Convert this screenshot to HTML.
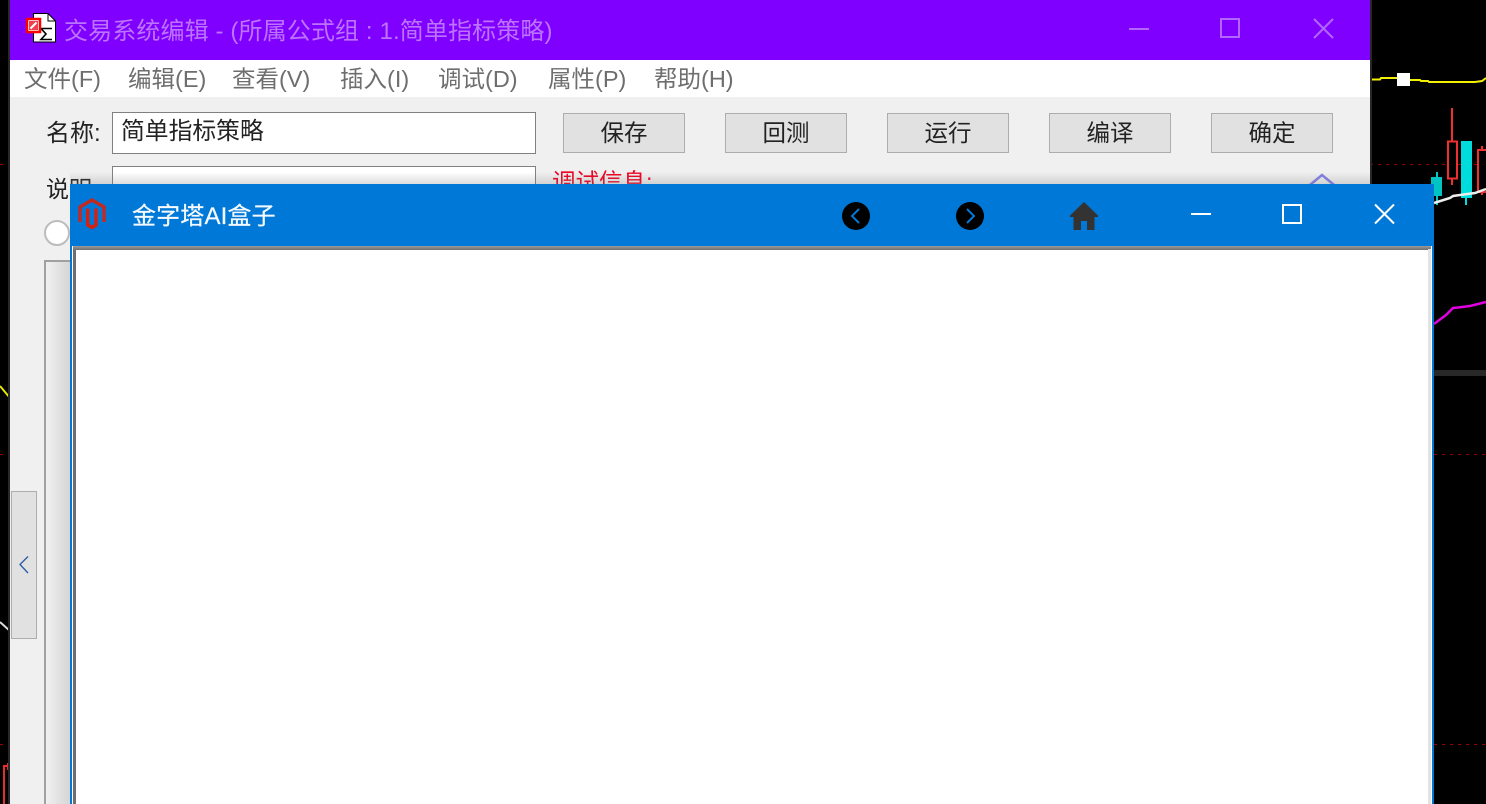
<!DOCTYPE html>
<html lang="zh"><head><meta charset="utf-8"><title>金字塔AI盒子</title>
<style>
html,body{margin:0;padding:0;width:1486px;height:804px;overflow:hidden;background:#000}
body{position:relative;font-family:"Liberation Sans","Noto Sans CJK SC",sans-serif;color:#111}
.a{position:absolute;box-sizing:border-box}
.t{position:absolute;white-space:nowrap;line-height:32px;height:32px}
.btn{position:absolute;top:113px;width:122px;height:40px;background:#e1e1e1;border:1px solid #adadad;box-sizing:border-box;text-align:center;font-size:23.500px;line-height:38px;color:#222}
.m{position:absolute;top:63px;font-size:23.500px;line-height:32px;color:#6e6e6e;white-space:nowrap}
svg{position:absolute;overflow:visible}
</style></head><body>
<svg style="left:0;top:0" width="1486" height="804" viewBox="0 0 1486 804" fill="none">
<path d="M1370 79.500H1380L1381 78H1400M1410 80H1420L1421 81H1428L1429 82H1475L1482 81L1486 78" stroke="#f3f000" stroke-width="2"/>
<path d="M0 386L10 398" stroke="#e8e800" stroke-width="2"/>
<path d="M0 622L10 631" stroke="#ddd" stroke-width="2"/>
<path d="M1370 164.500H1486M1434 454.500H1486M1434 744.500H1486M0 164.500H10M0 454.500H10M0 744.500H10" stroke="#a00000" stroke-dasharray="3 5"/>
<path d="M1437 172V205" stroke="#00c8c8" stroke-width="2"/>
<rect x="1431" y="177" width="11" height="19" fill="#00c4c4"/>
<path d="M1452 108V185" stroke="#ee3030" stroke-width="2"/>
<rect x="1448" y="141.500" width="9" height="37" fill="#000" stroke="#ee3030" stroke-width="2"/>
<path d="M1466 195V205" stroke="#00dcdc" stroke-width="2"/>
<rect x="1461" y="141" width="11" height="57" fill="#00dcdc"/>
<path d="M1482 146V195" stroke="#ee3030" stroke-width="2"/>
<rect x="1478" y="150" width="12" height="42" fill="#000" stroke="#ee3030" stroke-width="2"/>
<path d="M1434 203L1450 198L1453 196L1460 195L1475 193L1486 189" stroke="#eeeeee" stroke-width="2.500"/>
<path d="M1434 324L1446 315L1453 308L1458 307.500L1470 306L1486 302" stroke="#e000e0" stroke-width="2.500"/>
<rect x="1397" y="73" width="13" height="13" fill="#fff"/>
<rect x="1434" y="370" width="52" height="6" fill="#282828"/>
<path d="M4 804V766H10M8 763V770" stroke="#e03030" stroke-width="2"/>
</svg>
<div class="a" style="left:8px;top:0;width:2px;height:804px;background:#282828"></div>
<div class="a" style="left:1370px;top:0;width:2px;height:184px;background:#282828"></div>

<!-- back window -->
<div class="a" style="left:10px;top:0;width:1360px;height:804px;background:#f0f0f0"></div>
<div class="a" style="left:10px;top:0;width:1360px;height:60px;background:#8000ff"></div>
<div class="a" style="left:10px;top:60px;width:1360px;height:37px;background:#fff"></div>
<svg style="left:26px;top:14px" width="32" height="30" viewBox="0 0 32 30" fill="none">
<path d="M7.500 -.500H22L29.500 7V28H7.500Z" fill="#fff" stroke="#000"/><path d="M22 0V7H29" stroke="#000"/>
<path d="M26 14.500H15L20 20L15 25.500H26" stroke="#000" stroke-width="1.600"/>
<rect x="1" y="5" width="13" height="13" fill="#fff" stroke="#f00" stroke-width="2.500"/>
<rect x="3" y="7" width="9" height="9" fill="#f04050"/>
<path d="M4.500 14.500L10.500 8.500" stroke="#fff" stroke-width="2"/>
</svg>
<div class="t" style="left:64px;top:16px;font-size:24px;letter-spacing:.12px;color:#bc73ff">交易系统编辑 - (所属公式组 : 1.简单指标策略)</div>
<svg style="left:1120px;top:10px" width="220" height="40" viewBox="0 0 220 40" fill="none" stroke="#b366ff" stroke-width="2">
<path d="M9 19H29"/><rect x="101" y="9" width="18" height="18"/><path d="M194 9L213 28M213 9L194 28"/>
</svg>
<div class="m" style="left:24px">文件(F)</div><div class="m" style="left:128px">编辑(E)</div><div class="m" style="left:232px">查看(V)</div><div class="m" style="left:340px">插入(I)</div><div class="m" style="left:438px">调试(D)</div><div class="m" style="left:548px">属性(P)</div><div class="m" style="left:654px">帮助(H)</div>
<div class="t" style="left:46px;top:118px;font-size:24px;color:#222">名称:</div>
<div class="a" style="left:112px;top:112px;width:424px;height:42px;background:#fff;border:1px solid #808080"></div>
<div class="t" style="left:121px;top:116px;font-size:23.800px;color:#222">简单指标策略</div>
<div class="t" style="left:46px;top:173px;font-size:23px;color:#222">说明</div>
<div class="a" style="left:112px;top:166px;width:424px;height:30px;background:#fff;border:1px solid #808080"></div>
<div class="t" style="left:552px;top:166px;font-size:23.500px;color:#f00020">调试信息:</div>
<div class="btn" style="left:563px">保存</div><div class="btn" style="left:725px">回测</div><div class="btn" style="left:887px">运行</div><div class="btn" style="left:1049px">编译</div><div class="btn" style="left:1211px">确定</div>
<svg style="left:1300px;top:170px" width="44" height="20" fill="none"><path d="M5 19L22 5L39 19" stroke="#8080e8" stroke-width="2.500"/></svg>
<div class="a" style="left:44px;top:220px;width:26px;height:26px;border-radius:50%;background:#fff;border:2px solid #bcbcbc"></div>
<div class="a" style="left:44px;top:260px;width:30px;height:544px;border:2px solid #a0a0a0;border-right:0;border-bottom:0"></div>
<div class="a" style="left:11px;top:491px;width:26px;height:148px;background:#e1e1e1;border:1px solid #adadad"></div>
<svg style="left:18px;top:555px" width="12" height="20" fill="none"><path d="M10 1.500L2 9.500L10 18" stroke="#2a58a8" stroke-width="1.300"/></svg>
<div class="a" style="left:70px;top:172px;width:1300px;height:12px;background:linear-gradient(to bottom,rgba(120,120,120,0),rgba(120,120,120,.25))"></div>
<div class="a" style="left:46px;top:262px;width:24px;height:542px;background:linear-gradient(to right,rgba(120,120,120,0),rgba(120,120,120,.22))"></div>

<!-- front window -->
<div class="a" style="left:70px;top:184px;width:1364px;height:620px;background:#0078d7"></div>
<div class="a" style="left:72px;top:246px;width:1360px;height:558px;background:#fff"></div>
<div class="a" style="left:73px;top:246px;width:3px;height:558px;background:#6f6f6f"></div>
<div class="a" style="left:73px;top:246px;width:1358px;height:4px;background:linear-gradient(#9a9a9a,#6f6f6f)"></div>
<div class="a" style="left:1428px;top:249px;width:3px;height:555px;background:#e3e3e3"></div>
<svg style="left:78px;top:198px" width="28" height="32" viewBox="0 0 28 32" fill="none">
<path d="M2 24V9L14 2L26 9V24" stroke="#c4281e" stroke-width="3.400"/>
<path d="M9.700 10.500V27L14 29.500L18 27V10.500" stroke="#d8200f" stroke-width="3.400"/>
</svg>
<div class="t" style="left:132px;top:201px;font-size:24px;letter-spacing:.15px;color:#f4f9ff;-webkit-text-stroke:.2px #fff">金字塔AI盒子</div>
<svg style="left:842px;top:202px" width="28" height="28" fill="none"><circle cx="14" cy="14" r="14" fill="#000"/><path d="M17 7L10 14L17 21" stroke="#0078d7" stroke-width="2"/></svg>
<svg style="left:956px;top:202px" width="28" height="28" fill="none"><circle cx="14" cy="14" r="14" fill="#000"/><path d="M11 7L18 14L11 21" stroke="#0078d7" stroke-width="2"/></svg>
<svg style="left:1070px;top:202px" width="28" height="28"><path d="M14 0L28 13.500V15H24.500V28H17V19H11V28H3.500V15H0V13.500Z" fill="#333"/></svg>
<svg style="left:1180px;top:195px" width="220" height="40" fill="none" stroke="#fff" stroke-width="2">
<path d="M11 19H31"/><rect x="103" y="10" width="18" height="18"/><path d="M195 9.500L214 28.500M214 9.500L195 28.500"/>
</svg>
</body></html>
